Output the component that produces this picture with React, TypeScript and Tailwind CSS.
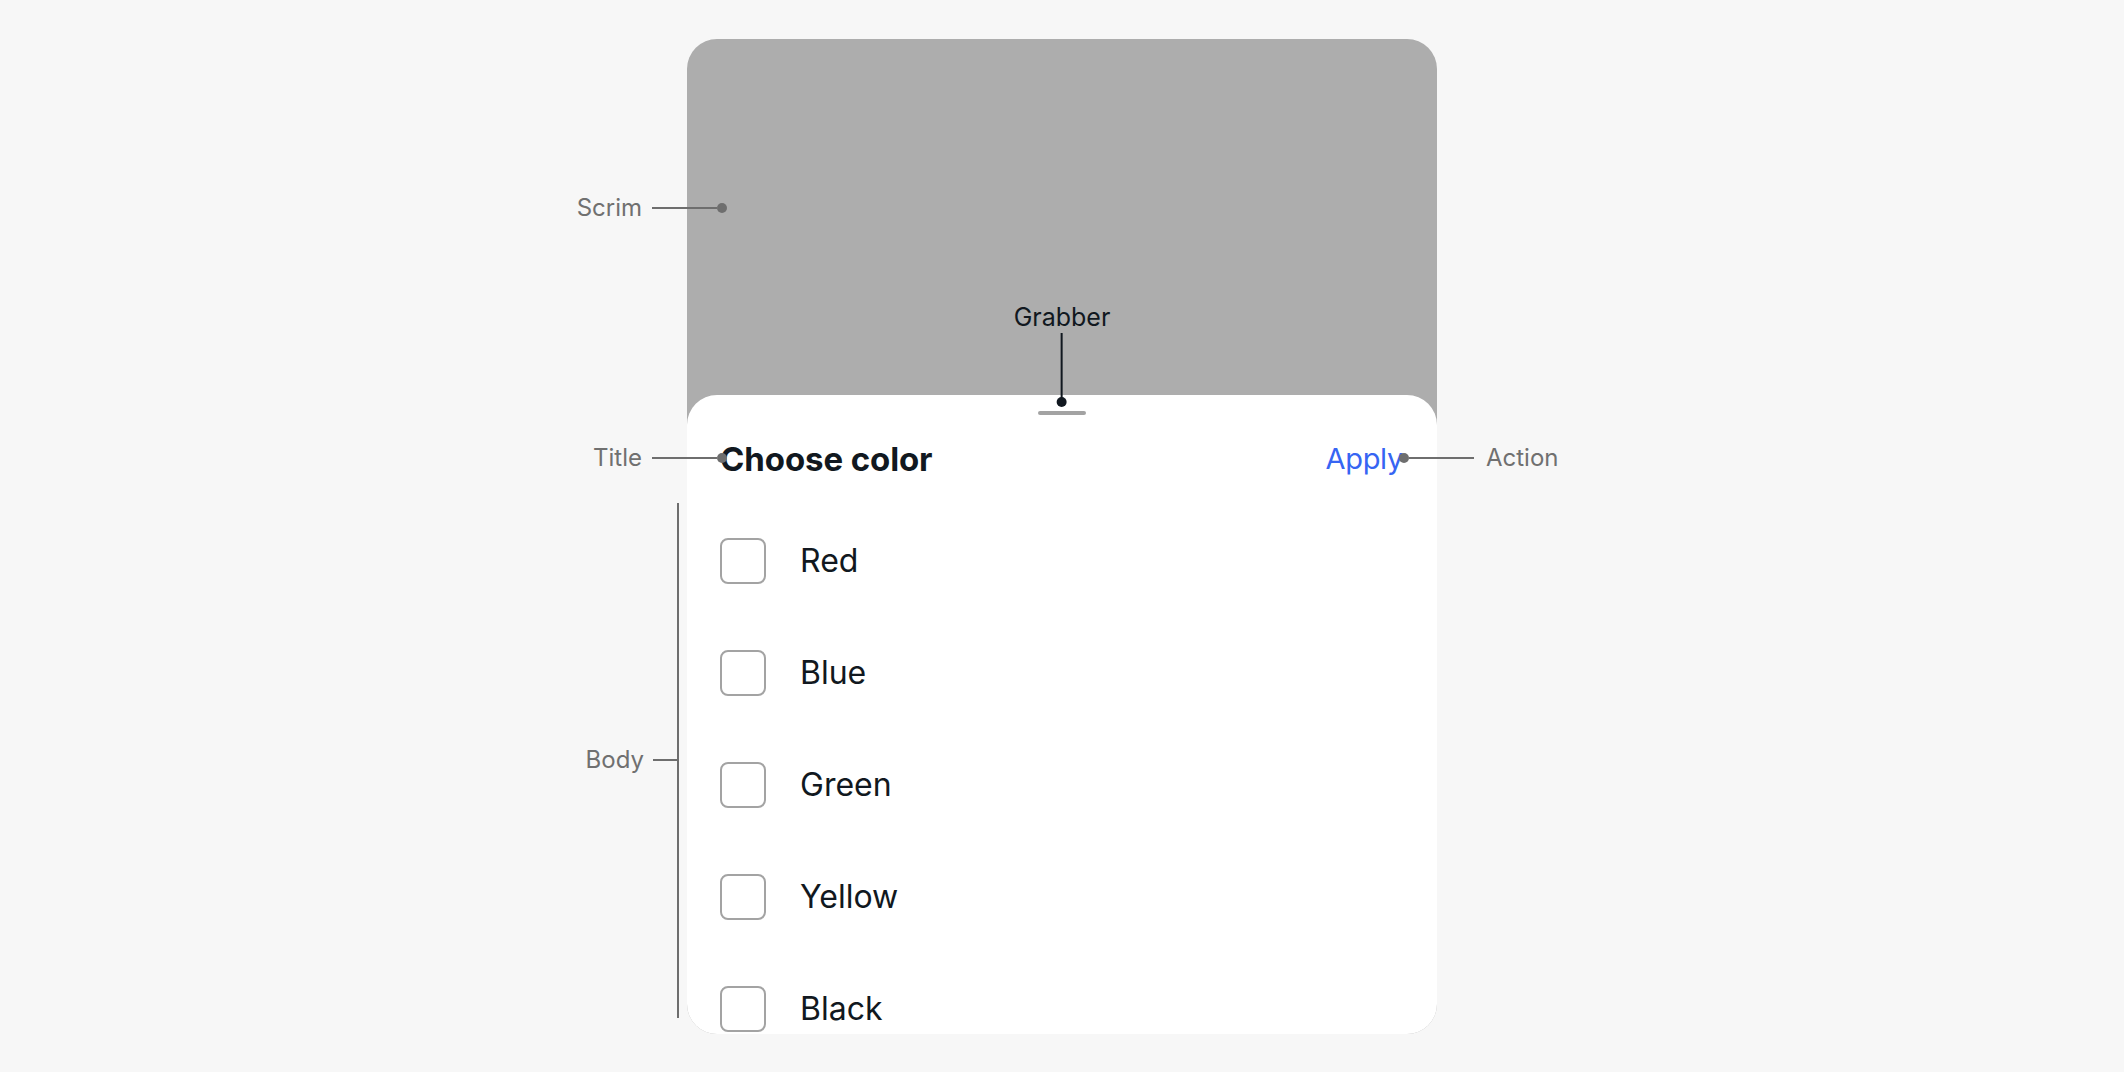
const colors = ['Red', 'Blue', 'Green', 'Yellow', 'Black'];

function Dot({ dark }: { dark?: boolean }) {
  return <div className={`w-[10px] h-[10px] rounded-full ${dark ? 'bg-[#111820]' : 'bg-[#6e6e6e]'}`} />;
}

export default function App() {
  return (
    <div
      className="w-full h-screen bg-[#f7f7f7] flex items-center justify-center"
      style={{ fontFamily: 'Inter, "Noto Sans", sans-serif' }}
    >
      <div className="relative w-[750px] h-[995px]">
        {/* phone frame */}
        <div className="w-full h-full rounded-[30px] overflow-hidden bg-[#adadad] flex flex-col">
          <div className="h-[356px] shrink-0" />
          <div className="flex-1 bg-white rounded-t-[30px] flex flex-col">
            <div className="flex justify-center pt-[16px]">
              <div className="w-[48px] h-[4px] rounded-full bg-[#a3a3a3]" />
            </div>
            <div className="flex items-center justify-between pl-[33px] pr-[34px] mt-[24px] h-[40px]">
              <h2 className="text-[33px] leading-[40px] font-bold text-[#111820] tracking-[-0.1px]">Choose color</h2>
              <button className="text-[29px] leading-[40px] text-[#3665f3] tracking-[-0.3px]">Apply</button>
            </div>
            <ul className="mt-[26px] pl-[33px]">
              {colors.map((c) => (
                <li key={c} className="h-[112px] flex items-center gap-[34px]">
                  <span className="w-[46px] h-[46px] rounded-[8px] border-2 border-[#a3a3a3] shrink-0" />
                  <span className="text-[32px] text-[#111820]">{c}</span>
                </li>
              ))}
            </ul>
          </div>
        </div>

        {/* annotations */}
        <div className="absolute right-[710px] top-[169px] -translate-y-1/2 flex items-center">
          <span className="text-[24px] text-[#707070] mr-[10px]">Scrim</span>
          <div className="w-[65px] h-[2px] bg-[#6e6e6e]" />
          <Dot />
        </div>

        <div className="absolute left-[375px] top-[263px] -translate-x-1/2 flex flex-col items-center">
          <span className="text-[25px] leading-[30px] text-[#111820]">Grabber</span>
          <div className="w-[2px] h-[68px] bg-[#111820] mt-[1px]" />
          <div className="-mt-[4px]">
            <Dot dark />
          </div>
        </div>

        <div className="absolute right-[710px] top-[419px] -translate-y-1/2 flex items-center">
          <span className="text-[24px] text-[#707070] mr-[10px]">Title</span>
          <div className="w-[65px] h-[2px] bg-[#6e6e6e]" />
          <Dot />
        </div>

        <div className="absolute left-[712px] top-[419px] -translate-y-1/2 flex items-center">
          <Dot />
          <div className="w-[65px] h-[2px] bg-[#6e6e6e]" />
          <span className="text-[24px] text-[#707070] ml-[12px]">Action</span>
        </div>

        <div className="absolute left-[-10px] top-[464px] w-[2px] h-[515px] bg-[#6e6e6e]" />
        <div className="absolute right-[759px] top-[721px] -translate-y-1/2 flex items-center">
          <span className="text-[24px] text-[#707070] mr-[9px]">Body</span>
          <div className="w-[25px] h-[2px] bg-[#6e6e6e]" />
        </div>
      </div>
    </div>
  );
}
